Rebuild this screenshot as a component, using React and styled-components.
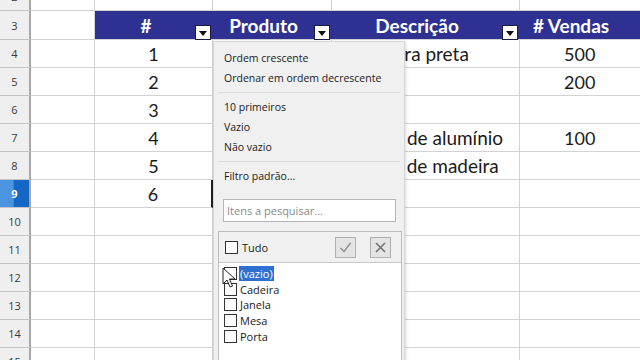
import React from 'react';
import styled, { createGlobalStyle } from 'styled-components';

const Global = createGlobalStyle`
    html, body {
        margin: 0;
        padding: 0;
        width: 640px;
        height: 360px;
        overflow: hidden;
        background: #ffffff;
    }
`;

const COLS = '31px 64px 118px 119px 188px 140px';

const Screen = styled.div`
    position: relative;
    width: 640px;
    height: 360px;
    overflow: hidden;
    font-family: Lato, "Liberation Sans", sans-serif;
`;

const Sheet = styled.div`
    margin-top: -17px;
    display: flex;
    flex-direction: column;
`;

const Row = styled.div`
    display: grid;
    grid-template-columns: ${COLS};
    height: ${props => props.tall ? '29px' : '28px'};
`;

const RowHead = styled.div`
    display: flex;
    align-items: center;
    justify-content: center;
    font-family: "Open Sans", sans-serif;
    font-size: 11px;
    color: ${props => props.active ? '#ffffff' : '#3a3a3a'};
    font-weight: ${props => props.active ? 700 : 400};
    background: ${props => props.active
        ? 'linear-gradient(90deg, #4a94e0 0%, #4a94e0 45%, #1467c4 50%, #1467c4 100%)'
        : '#efefef'};
    border-right: 2px solid #a9a9a9;
    border-bottom: 1px solid #c4c4c4;
    box-sizing: border-box;
`;

const Cell = styled.div`
    display: flex;
    align-items: center;
    justify-content: ${props => props.align || 'center'};
    padding-left: ${props => props.indent || 0}px;
    font-size: ${props => props.wide ? 19 : 18}px;
    color: #1a1a1a;
    white-space: nowrap;
    border-right: 1px solid #d2d2d2;
    border-bottom: 1px solid #d2d2d2;
    box-sizing: border-box;
    ${props => props.cursor ? 'border-right: 2px solid #202020;' : ''}
`;

const HeadCell = styled.div`
    position: relative;
    display: flex;
    align-items: center;
    justify-content: center;
    padding-right: ${props => props.shift || 0}px;
    background: #2e3192;
    color: #ffffff;
    font-size: 19px;
    font-weight: 700;
    border-bottom: 1px solid #d2d2d2;
    box-sizing: border-box;
`;

const FilterBtn = styled.span`
    position: absolute;
    right: 2px;
    top: 14px;
    width: 14px;
    height: 13px;
    background: #ffffff;
    border: 1px solid #1a1a3a;
    display: flex;
    align-items: center;
    justify-content: center;

    &::after {
        content: '';
        border-left: 4px solid transparent;
        border-right: 4px solid transparent;
        border-top: 5px solid #111111;
        margin-top: 1px;
    }
`;

const Popup = styled.div`
    position: absolute;
    left: 213px;
    top: 41px;
    width: 192px;
    height: 330px;
    background: #f0f0f0;
    border: 1px solid #d6d6d6;
    box-sizing: border-box;
    box-shadow: 1px 1px 3px rgba(0, 0, 0, 0.15);
    font-family: "Open Sans", sans-serif;
    font-size: 10.5px;
    color: #1a1a1a;
    padding: 7px 0 0 0;
    display: flex;
    flex-direction: column;
`;

const MenuItem = styled.div`
    height: 20px;
    line-height: 19px;
    padding-left: 10px;
    white-space: nowrap;
`;

const Separator = styled.div`
    height: 1px;
    margin: 3px 4px 5px 4px;
    background: #dadada;
`;

const Search = styled.div`
    margin: 12px 8px 0 9px;
    height: 23px;
    background: #ffffff;
    border: 1px solid #b5b5b5;
    box-sizing: border-box;
    color: #8a8a8a;
    font-size: 11px;
    line-height: 21px;
    padding-left: 3px;
`;

const ListBox = styled.div`
    margin: 9px 2px 0 4px;
    flex: 1;
    border: 1px solid #bdbdbd;
    display: flex;
    flex-direction: column;
`;

const ListTop = styled.div`
    height: 30px;
    display: flex;
    align-items: center;
    padding: 0 10px 0 6px;
    gap: 4px;
    font-size: 11px;
    border-bottom: 1px solid #c8c8c8;
`;

const Spacer = styled.div`
    flex: 1;
`;

const IconBtn = styled.div`
    width: 21px;
    height: 21px;
    margin-left: 10px;
    background: #e4e4e4;
    border: 1px solid #b0b0b0;
    box-sizing: border-box;
    display: flex;
    align-items: center;
    justify-content: center;
`;

const List = styled.div`
    flex: 1;
    background: #ffffff;
    padding: 3px 0 0 5px;
    position: relative;
    font-size: 11px;
`;

const Entry = styled.div`
    height: 15.6px;
    display: flex;
    align-items: center;
    gap: 2px;
    white-space: nowrap;
`;

const Box = styled.span`
    width: 11px;
    height: 11px;
    border: 1px solid #333333;
    background: #ffffff;
    flex: none;
`;

const Label = styled.span`
    padding: 0 1px;
    ${props => props.selected ? 'background: #2f6fd0; color: #ffffff;' : ''}
`;

const Pointer = styled.svg`
    position: absolute;
    left: 3px;
    top: 4px;
`;

const rows = [
    { n: 4, id: '1', prod: 'Cadeira', desc: 'Cadeira preta', qty: '500' },
    { n: 5, id: '2', prod: 'Janela', desc: '', qty: '200' },
    { n: 6, id: '3', prod: 'Mesa', desc: '', qty: '' },
    { n: 7, id: '4', prod: 'Mesa', desc: 'Mesa de alumínio', qty: '100' },
    { n: 8, id: '5', prod: 'Porta', desc: 'Porta de madeira', qty: '' },
    { n: 9, id: '6', prod: '', desc: '', qty: '' },
];

const entries = ['(vazio)', 'Cadeira', 'Janela', 'Mesa', 'Porta'];

function EmptyRow({ n }) {
    return (
        <Row>
            <RowHead>{n}</RowHead>
            <Cell /><Cell /><Cell /><Cell /><Cell />
        </Row>
    );
}

export default function App() {
    return (
        <Screen>
            <Global />
            <Sheet>
                <EmptyRow n={2} />
                <Row tall>
                    <RowHead>3</RowHead>
                    <Cell />
                    <HeadCell shift={16}>#<FilterBtn /></HeadCell>
                    <HeadCell shift={18}>Produto<FilterBtn /></HeadCell>
                    <HeadCell shift={18}>Descrição<FilterBtn /></HeadCell>
                    <HeadCell shift={38}># Vendas<FilterBtn /></HeadCell>
                </Row>
                {rows.map(r => (
                    <Row key={r.n}>
                        <RowHead active={r.n === 9}>{r.n}</RowHead>
                        <Cell />
                        <Cell cursor={r.n === 9}>{r.id}</Cell>
                        <Cell align="flex-start" indent={4}>{r.prod}</Cell>
                        <Cell align="flex-start" indent={25} wide>{r.desc}</Cell>
                        <Cell align="flex-start" indent={44}>{r.qty}</Cell>
                    </Row>
                ))}
                {[10, 11, 12, 13, 14, 15].map(n => <EmptyRow key={n} n={n} />)}
            </Sheet>

            <Popup>
                <MenuItem>Ordem crescente</MenuItem>
                <MenuItem>Ordenar em ordem decrescente</MenuItem>
                <Separator />
                <MenuItem>10 primeiros</MenuItem>
                <MenuItem>Vazio</MenuItem>
                <MenuItem>Não vazio</MenuItem>
                <Separator />
                <MenuItem>Filtro padrão...</MenuItem>
                <Search>Itens a pesquisar...</Search>
                <ListBox>
                    <ListTop>
                        <Box />
                        <span>Tudo</span>
                        <Spacer />
                        <IconBtn>
                            <svg width="13" height="13" viewBox="0 0 13 13">
                                <path d="M1.5 7 L5 10.5 L11.5 2" fill="none" stroke="#8c8c8c" strokeWidth="1.3" />
                            </svg>
                        </IconBtn>
                        <IconBtn>
                            <svg width="13" height="13" viewBox="0 0 13 13">
                                <path d="M2 2 L11 11 M11 2 L2 11" fill="none" stroke="#6e6e6e" strokeWidth="1.5" />
                            </svg>
                        </IconBtn>
                    </ListTop>
                    <List>
                        {entries.map((e, i) => (
                            <Entry key={e}>
                                <Box />
                                <Label selected={i === 0}>{e}</Label>
                            </Entry>
                        ))}
                        <Pointer width="14" height="22" viewBox="0 0 14 22">
                            <path d="M1 1 L1 17 L5 13 L8 20 L10.5 19 L7.5 12 L13 12 Z" fill="#ffffff" stroke="#222222" strokeWidth="1" strokeLinejoin="round" />
                        </Pointer>
                    </List>
                </ListBox>
            </Popup>
        </Screen>
    );
}
